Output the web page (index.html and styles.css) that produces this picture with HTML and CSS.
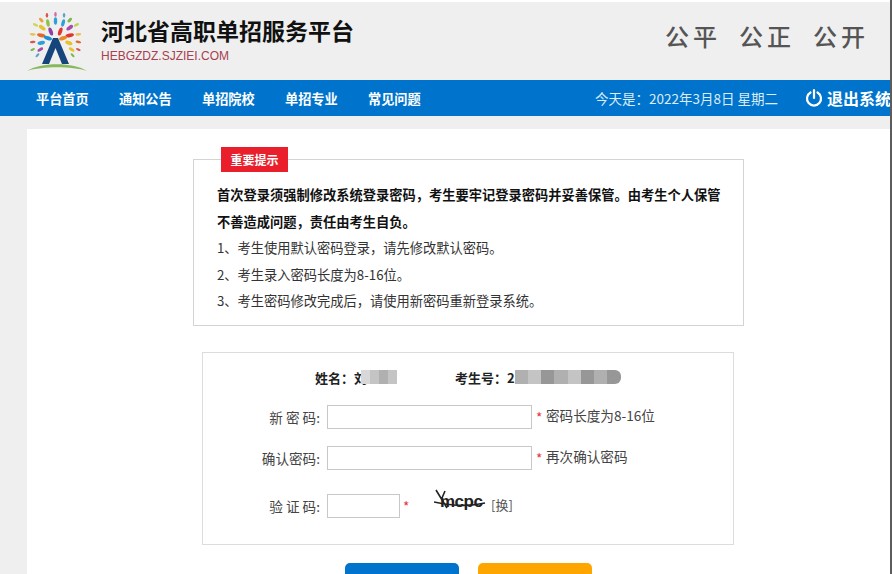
FILE: index.html
```html
<!DOCTYPE html>
<html lang="zh-CN">
<head>
<meta charset="utf-8">
<title>河北省高职单招服务平台</title>
<link rel="stylesheet" href="styles.css">
</head>
<body>
<div class="top-line"></div>
<header class="header">
  <svg class="logo" width="62" height="64" viewBox="0 0 62 64" aria-hidden="true">
    <g transform="translate(29.500 32) scale(0.95)">
      <ellipse cx="-5" cy="-10" rx="2" ry="4.500" fill="#8e3fa0" transform="rotate(-20 -5 -10)"/>
      <ellipse cx="5" cy="-10" rx="2" ry="4.500" fill="#e2352f" transform="rotate(20 5 -10)"/>
      <ellipse cx="-8" cy="-19" rx="1.800" ry="4" fill="#8bc34a" transform="rotate(-10 -8 -19)"/>
      <ellipse cx="0" cy="-21" rx="1.800" ry="4" fill="#2f9fd8"/>
      <ellipse cx="8" cy="-19" rx="1.800" ry="4" fill="#2f9fd8" transform="rotate(15 8 -19)"/>
      <ellipse cx="-9" cy="-27" rx="1.300" ry="2.600" fill="#d9534f"/>
      <ellipse cx="0" cy="-28" rx="1.300" ry="2.600" fill="#d16a9e"/>
      <ellipse cx="9" cy="-27" rx="1.300" ry="2.600" fill="#5aa3c9"/>
      <ellipse cx="-15" cy="-22" rx="1.600" ry="3" fill="#e9a23b" transform="rotate(-45 -15 -22)"/>
      <ellipse cx="15" cy="-22" rx="1.600" ry="3" fill="#7cb74a" transform="rotate(45 15 -22)"/>
      <ellipse cx="-14" cy="-14" rx="2" ry="4" fill="#e8c22c" transform="rotate(-55 -14 -14)"/>
      <ellipse cx="15" cy="-14" rx="2" ry="4" fill="#a64ca6" transform="rotate(55 15 -14)"/>
      <ellipse cx="-21" cy="-17" rx="1.400" ry="3" fill="#cbd65a" transform="rotate(-65 -21 -17)"/>
      <ellipse cx="22" cy="-17" rx="1.400" ry="3" fill="#bcd25a" transform="rotate(65 22 -17)"/>
      <ellipse cx="-15" cy="-6" rx="2" ry="4.500" fill="#e4682a" transform="rotate(-80 -15 -6)"/>
      <ellipse cx="15" cy="-6" rx="2" ry="4.500" fill="#e2352f" transform="rotate(80 15 -6)"/>
      <ellipse cx="-8" cy="-3" rx="2" ry="4.500" fill="#1f8fd0" transform="rotate(-70 -8 -3)"/>
      <ellipse cx="8" cy="-3" rx="2" ry="4.500" fill="#e88a2a" transform="rotate(70 8 -3)"/>
      <ellipse cx="-24" cy="-7" rx="1.400" ry="3.200" fill="#e9c25b" transform="rotate(-85 -24 -7)"/>
      <ellipse cx="24" cy="-7" rx="1.400" ry="3.200" fill="#e9c25b" transform="rotate(85 24 -7)"/>
      <ellipse cx="-15" cy="2" rx="2" ry="4" fill="#2f9fd8" transform="rotate(-100 -15 2)"/>
      <ellipse cx="14" cy="2" rx="2" ry="4" fill="#e8c22c" transform="rotate(110 14 2)"/>
      <ellipse cx="-24" cy="1" rx="1.300" ry="3" fill="#d9534f" transform="rotate(-95 -24 1)"/>
      <ellipse cx="24" cy="1" rx="1.300" ry="3" fill="#e4682a" transform="rotate(100 24 1)"/>
      <ellipse cx="-16" cy="9" rx="1.600" ry="3.400" fill="#a64ca6" transform="rotate(-120 -16 9)"/>
      <ellipse cx="17" cy="9" rx="1.600" ry="3.400" fill="#e8c22c" transform="rotate(120 17 9)"/>
      <ellipse cx="-24" cy="9" rx="1.200" ry="2.600" fill="#7cb74a" transform="rotate(-115 -24 9)"/>
      <ellipse cx="24" cy="9" rx="1.200" ry="2.600" fill="#d9534f" transform="rotate(115 24 9)"/>
      <ellipse cx="-19" cy="15" rx="1.200" ry="2.600" fill="#5aa3c9" transform="rotate(-135 -19 15)"/>
      <ellipse cx="18" cy="15" rx="1.200" ry="2.600" fill="#7cb74a" transform="rotate(135 18 15)"/>
    </g>
    <path d="M16 55 L27 29 H32 L43 55 H36 L29.500 39 L23 55 Z" fill="#16457c"/>
    <path d="M1 62 C14 53 48 53 61 62 C46 57 16 57 1 62 Z" fill="#86b85c"/>
  </svg>
  <div class="brand">
    <h1 class="brand-title">河北省高职单招服务平台</h1>
    <p class="brand-sub">HEBGZDZ.SJZIEI.COM</p>
  </div>
  <div class="motto"><span>公平</span><span>公正</span><span>公开</span></div>
</header>
<nav class="nav">
  <a class="nav-link">平台首页</a>
  <a class="nav-link">通知公告</a>
  <a class="nav-link">单招院校</a>
  <a class="nav-link">单招专业</a>
  <a class="nav-link">常见问题</a>
  <span class="nav-date">今天是：2022年3月8日 星期二</span>
  <a class="nav-exit">
    <svg width="18" height="18" viewBox="0 0 18 18" aria-hidden="true">
      <path d="M5.500 3.500 A7 7 0 1 0 12.500 3.500" fill="none" stroke="#fff" stroke-width="2.200" stroke-linecap="round"/>
      <path d="M9 1.200 V9" fill="none" stroke="#fff" stroke-width="2.200" stroke-linecap="round"/>
    </svg>
    <span>退出系统</span>
  </a>
</nav>
<main class="card">
  <section class="notice">
    <div class="notice-tab">重要提示</div>
    <p class="strong">首次登录须强制修改系统登录密码，考生要牢记登录密码并妥善保管。由考生个人保管</p>
    <p class="strong">不善造成问题，责任由考生自负。</p>
    <p>1、考生使用默认密码登录，请先修改默认密码。</p>
    <p>2、考生录入密码长度为8-16位。</p>
    <p>3、考生密码修改完成后，请使用新密码重新登录系统。</p>
  </section>
  <form class="form">
    <div class="identity">
      <div class="id-item id-name">姓名：刘<span class="mask mask-name"><i class="m3"></i><i></i><i class="m1"></i><i></i></span></div>
      <div class="id-item id-num">考生号：2<span class="mask mask-num"><i class="m1"></i><i></i><i class="m2"></i><i class="m1"></i><i></i><i class="m2"></i><i class="m1"></i><i class="m2"></i></span></div>
    </div>
    <div class="row">
      <label class="label">新 密 码:</label>
      <input class="input" type="password">
      <span class="star">*</span>
      <span class="hint">密码长度为8-16位</span>
    </div>
    <div class="row">
      <label class="label">确认密码:</label>
      <input class="input" type="password">
      <span class="star">*</span>
      <span class="hint">再次确认密码</span>
    </div>
    <div class="row row-code">
      <label class="label">验 证 码:</label>
      <input class="input input-code" type="text">
      <span class="star star-code">*</span>
      <span class="captcha">mcpc
        <svg class="captcha-noise" width="52" height="24" viewBox="0 0 52 24" aria-hidden="true">
          <path d="M2 1 L13 19 M11 2 L8 9 M0 13 C14 16 34 18 51 14" fill="none" stroke="#222" stroke-width="1.600"/>
        </svg>
      </span>
      <a class="swap">[换]</a>
    </div>
  </form>
  <div class="actions">
    <button class="btn btn-blue" type="button"></button>
    <button class="btn btn-orange" type="button"></button>
  </div>
</main>
</body>
</html>
```
FILE: styles.css
```css
* { box-sizing: border-box; }
html, body { margin: 0; height: 574px; overflow: hidden; }
body {
  background: #efefef;
  border-right: 2px solid #5c5c5c;
  font-family: "Noto Sans CJK SC", "Noto Sans", sans-serif;
  color: #222;
}
.top-line { height: 2px; background: #fff; }
.header {
  height: 78px;
  display: flex;
  align-items: flex-start;
  padding-left: 26px;
  background: #efefef;
}
.logo { margin-top: 7px; flex: none; }
.brand { margin-left: 13px; }
.brand-title {
  margin: 12px 0 0;
  font-size: 23px;
  line-height: 32px;
  font-weight: 700;
  color: #111;
}
.brand-sub {
  margin: 2px 0 0;
  font-family: "Liberation Sans", sans-serif;
  font-size: 12px;
  line-height: 16px;
  color: #a8404e;
}
.motto {
  margin: 16px 0 0 auto;
  padding-right: 21px;
  display: flex;
  gap: 18px;
  font-size: 24px;
  font-weight: 500;
  line-height: 36px;
  letter-spacing: 4px;
  color: #555;
}
.nav {
  height: 36px;
  display: flex;
  align-items: center;
  padding-left: 36px;
  background: #0074cc;
  color: #fff;
  white-space: nowrap;
  overflow: hidden;
}
.nav-link {
  width: 83px;
  flex: none;
  font-size: 13.200px;
  font-weight: 700;
}
.nav-date {
  margin-left: 144px;
  flex: none;
  font-size: 13.500px;
  color: #dcecf8;
}
.nav-exit {
  margin-left: 27px;
  flex: none;
  display: flex;
  align-items: center;
  gap: 4px;
  font-size: 16px;
  font-weight: 700;
}
.card {
  margin: 13px 0 0 27px;
  padding-top: 18px;
  height: 445px;
  overflow: hidden;
  background: #fff;
}
.notice {
  position: relative;
  margin: 12px 0 0 166px;
  width: 551px;
  height: 167px;
  padding: 22px 20px 0 23px;
  border: 1px solid #d4d4d4;
}
.notice p {
  margin: 0;
  font-size: 13.250px;
  line-height: 26.500px;
  white-space: nowrap;
  color: #333;
}
.notice .strong { font-weight: 700; color: #111; }
.notice-tab {
  position: absolute;
  left: 27px;
  top: -13px;
  width: 67px;
  height: 25px;
  background: #e9202c;
  color: #fff;
  font-size: 12px;
  font-weight: 700;
  line-height: 25px;
  text-align: center;
}
.form {
  margin: 26px 0 0 175px;
  width: 532px;
  height: 193px;
  border: 1px solid #dcdcdc;
  padding-top: 12px;
}
.identity { display: flex; height: 24px; align-items: center; font-size: 13px; font-weight: 700; color: #222; }
.id-item { display: flex; align-items: center; white-space: nowrap; }
.id-name { margin-left: 112px; width: 140px; }
.mask { display: flex; height: 14px; }
.mask i { display: block; background: #c4c4c4; }
.mask .m1 { background: #b0b0b0; }
.mask .m2 { background: #979797; }
.mask .m3 { background: #d8d8d8; }
.mask-name { margin-left: -6px; }
.mask-name i { width: 9px; }
.mask-num { border-radius: 0 6px 6px 0; overflow: hidden; }
.mask-num i { width: 13.250px; }
.row { display: flex; align-items: center; height: 24px; margin-top: 16px; font-size: 13.600px; color: #444; }
.row + .row { margin-top: 17px; }
.row-code { margin-top: 24px !important; }
.label { width: 117px; text-align: right; flex: none; }
.input {
  margin-left: 7px;
  width: 205px;
  height: 24px;
  flex: none;
  border: 1px solid #c8c8c8;
  background: #fff;
  padding: 0;
}
.input-code { width: 73px; }
.star { margin-left: 4px; width: 10px; color: #e9323f; flex: none; }
.star-code { margin-left: 3px; }
.hint { margin-top: -4px; }
.captcha {
  position: relative;
  margin: -8px 0 0 21px;
  width: 50px;
  padding-left: 6px;
  font-family: "Liberation Sans", sans-serif;
  font-size: 17px;
  font-weight: 700;
  letter-spacing: -0.500px;
  color: #222;
}
.captcha-noise { position: absolute; left: 0; top: -3px; }
.swap { margin-left: 7px; margin-top: -3px; font-size: 13px; color: #555; }
.actions {
  margin: 18px 0 0 318px;
  display: flex;
  gap: 19px;
}
.btn {
  width: 114px;
  height: 40px;
  border: 0;
  border-radius: 5px;
  padding: 0;
}
.btn-blue { background: #0074cc; }
.btn-orange { background: #ffa500; }
```
